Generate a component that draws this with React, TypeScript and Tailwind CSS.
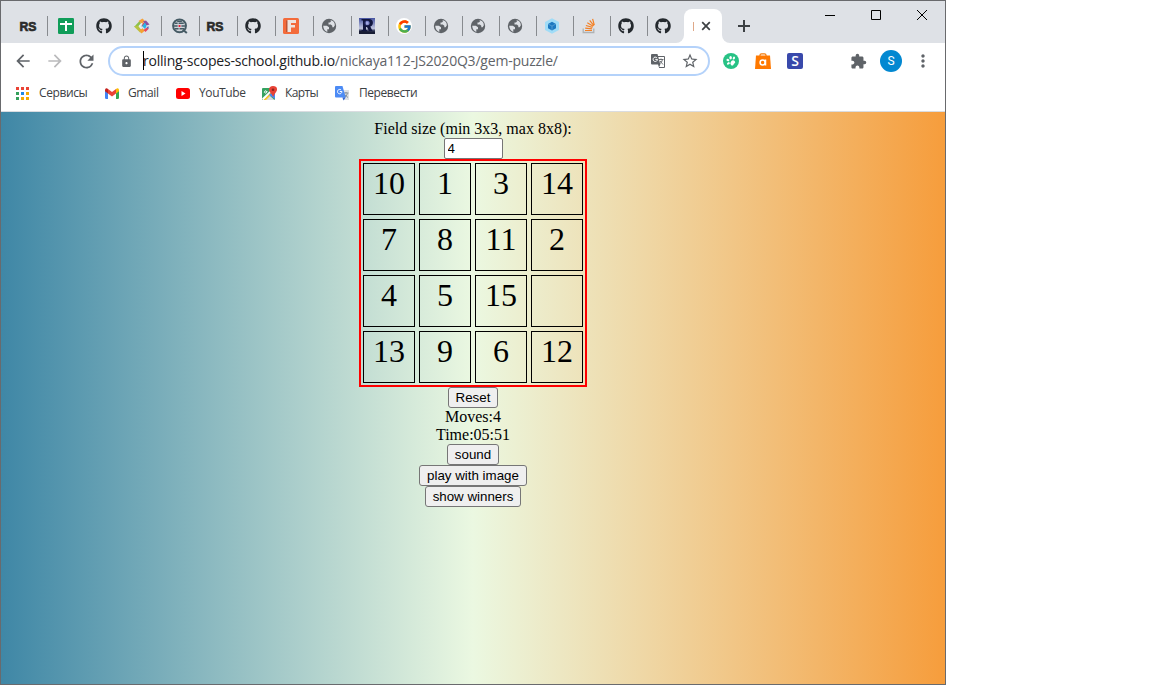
import type { ReactNode } from "react";
import { FaGithub } from "react-icons/fa";
import { FcGoogle } from "react-icons/fc";
import {
  MdArrowBack,
  MdArrowForward,
  MdExtension,
  MdLock,
  MdMoreVert,
  MdRefresh,
  MdStarBorder,
} from "react-icons/md";

function RsIcon() {
  return (
    <svg width="16" height="16" viewBox="0 0 16 16" className="overflow-visible">
      <text x="-0.5" y="14" fontFamily="Liberation Sans" fontWeight="bold" fontSize="15" textLength="17" lengthAdjust="spacingAndGlyphs" transform="translate(0 1.4) scale(1 .84)" fill="#2b2b2b" stroke="#2b2b2b" strokeWidth=".8">RS</text>
    </svg>
  );
}

function SheetIcon() {
  return (
    <svg width="16" height="16" viewBox="0 0 16 16">
      <rect width="16" height="16" rx="1.3" fill="#109d59" />
      <path d="M2 5h12v2H9v6H7V7H2zM7 3h2v3H7z" fill="#fff" />
    </svg>
  );
}

function CodeArrowsIcon() {
  return (
    <svg width="16" height="16" viewBox="0 0 16 16">
      <path d="M6 2.500L7 5.500 4.500 8.500 0 9z" fill="#8cc04b" />
      <path d="M0 8.500l4 -1 3 4-.5 3.500z" fill="#b5c441" />
      <path d="M4.500 3L8.500 0.500 11 3 8 5.500z" fill="#f6a13a" />
      <path d="M9 3.500l3-1 3.500 4-3 1z" fill="#8c4fa0" />
      <path d="M7.500 7.500L11 4.500l1.500 3.500-1.500 3z" fill="#25b3e8" />
      <path d="M5 12l3-2 3 2.500L7.500 15.500z" fill="#f4a233" />
      <path d="M9 5l1.800-.7-3.300 5z" fill="#e33a38" />
      <path d="M9.500 12l3-2.200 2.500.7-3.500 3.500z" fill="#e9485c" />
      <path d="M12.500 9l2.500-.5-1 2.500z" fill="#506ac0" />
      <path d="M7.200 5L4.500 8l2.700 3.200 1-1L6.600 8l1.600-2z" fill="#e9edf1" />
    </svg>
  );
}

function SearchGridIcon() {
  return (
    <svg width="17" height="16" viewBox="0 0 17 16" fill="none" stroke="#455a64">
      <circle cx="8" cy="7.8" r="6.900" strokeWidth="2" fill="#cfd5da" />
      <path d="M3 5h3m1 0h5.500M2 8h4m4 0h4M3 11h4m1 0h5M5.500 3h5" strokeWidth="1.600" />
      <path d="M11.500 12l4.300 3.500" strokeWidth="2.200" />
      <path d="M7 7h2v2H7z" fill="#f0102c" stroke="none" />
    </svg>
  );
}

function FIcon() {
  return (
    <svg width="16" height="16" viewBox="0 0 16 16">
      <rect width="16" height="16" rx="1.5" fill="#f36b3b" />
      <path d="M5 13.5V3h8" fill="none" stroke="#bd5434" strokeWidth="2" transform="translate(-1 .5)" />
      <path d="M4.500 2H13v3H8v2h4v2.500H8V14H4.500z" fill="#eee5df" />
    </svg>
  );
}

function RIcon() {
  return (
    <svg width="16" height="16" viewBox="0 0 16 16">
      <defs>
        <linearGradient id="night" x1="0" y1="0" x2="0" y2="1">
          <stop offset="0" stopColor="#4653a0" />
          <stop offset=".65" stopColor="#c0c5df" />
          <stop offset=".8" stopColor="#303653" />
          <stop offset="1" stopColor="#10142a" />
        </linearGradient>
        <radialGradient id="moon">
          <stop stopColor="#c8ccff" />
          <stop offset="1" stopColor="#3944af" stopOpacity="0" />
        </radialGradient>
      </defs>
      <rect width="16" height="16" fill="url(#night)" />
      <path fillRule="evenodd" d="M2.500 1H10c5 0 5 6.500 1.300 7.500l2.200 4.500H10L8 9H7v3h1v1.500H2.500V12H4V2.500H2.500zM7 3v4h2c2 0 2-4 0-4z" fill="#11163f" />
      <circle cx="8" cy="5" r="3.2" fill="url(#moon)" />
      <path d="M0 13l16 1v2H0z" fill="#181d34" />
    </svg>
  );
}

function WebpackIcon() {
  return (
    <svg width="16" height="16" viewBox="0 0 16 16">
      <path d="M8 .2l7 3.9v7.8l-7 3.9-7-3.9V4.100z" fill="#a0dcf7" />
      <path d="M8 3.700l4 2.200v4.300l-4 2.200-4-2.200V5.900z" fill="#1c78c0" />
      <path d="M4 5.900l4 2.200 4-2.200M8 8.100v4.300" stroke="#83bfe5" strokeWidth=".5" fill="none" />
    </svg>
  );
}

function StackIcon() {
  return (
    <svg width="16" height="16" viewBox="0 0 16 16" fill="none">
      <path d="M2.200 10.500v4h10.600v-4" stroke="#b0b2b3" strokeWidth="1.300" />
      <path d="M4 12.500h7M4.200 10.200l6.900.7M4.900 7.500l6.600 1.900M6.300 4.700l5.900 3.500M8.700 2.300l4.200 5.400M11.600.8l1.700 6.400" stroke="#f48024" strokeWidth="1.200" />
    </svg>
  );
}

function GoogleIcon() {
  return (
    <div className="flex size-4 shrink-0 items-center justify-center rounded-full bg-white">
      <FcGoogle size={15} />
    </div>
  );
}

function Globe() {
  return (
    <svg width="16" height="16" viewBox="0 0 16 16" className="shrink-0">
      <circle cx="8" cy="8" r="7.200" fill="#5f6368" />
      <path d="M2.200 7.800h3.600L8 9.200v2H6.300V14Q2.500 12.600 2.200 7.800zM9 2.300l1.200.8L9 4.600H7.500v2h2.300l1.500 1.200v1.400h1.300l1.200-1.700Q14 4 10.800 2.600z" fill="#dee1e6" />
    </svg>
  );
}

function Github() {
  return <FaGithub size={16} className="text-[#24292e]" />;
}

const wideTabs: ReactNode[] = [<SheetIcon />, <Github />, <CodeArrowsIcon />, <SearchGridIcon />];
const shiftedTabs: ReactNode[] = [<RsIcon />, <Github />, <FIcon />, <Globe />];
const narrowTabs: ReactNode[] = [<RIcon />, <GoogleIcon />, <Globe />, <Globe />, <Globe />, <WebpackIcon />, <StackIcon />, <Github />];

function Tab({ icon, className }: { icon: ReactNode; className: string }) {
  return (
    <div className={`flex h-5 shrink-0 items-center border-r border-[#888b8f] ${className}`}>
      <div className="flex h-4 w-4 items-center">{icon}</div>
    </div>
  );
}

function TabStrip() {
  return (
    <div className="flex h-[42px] bg-[#dee1e6]">
      <div className="flex h-5 mt-[15px] shrink-0">
        <Tab icon={<RsIcon />} className="w-[47px] pl-[19px]" />
        {wideTabs.map((icon, i) => <Tab key={i} icon={icon} className="w-[38px] pl-2.5" />)}
        {shiftedTabs.map((icon, i) => <Tab key={i} icon={icon} className="w-[38px] pl-[7px]" />)}
        {narrowTabs.map((icon, i) => <Tab key={i} icon={icon} className="w-[37px] pl-[7px]" />)}
        <div className="flex w-7 items-center pl-[7px]"><Github /></div>
      </div>
      <div className="flex shrink-0 items-end">
        <div className="h-2 w-2 bg-white">
          <div className="size-2 rounded-br-[8px] bg-[#dee1e6]" />
        </div>
        <div className="flex h-[34px] w-[38px] items-center rounded-t-[8px] bg-white pl-[9px]">
          <div className="h-[9px] w-px bg-[#dfa888]" />
          <svg width="10" height="10" viewBox="0 0 10 10" className="ml-[7px]">
            <path d="M1.200 1.200l7.600 7.600M8.800 1.200L1.200 8.800" stroke="#3c4043" strokeWidth="1.700" />
          </svg>
        </div>
        <div className="h-2 w-2 bg-white">
          <div className="size-2 rounded-bl-[8px] bg-[#dee1e6]" />
        </div>
      </div>
      <svg width="12" height="12" viewBox="0 0 12 12" className="mt-[19px] ml-2 shrink-0">
        <path d="M6 0v12M0 6h12" stroke="#3c4043" strokeWidth="2" />
      </svg>
      <svg width="104" height="12" viewBox="0 0 104 12" fill="none" stroke="#000" className="mt-2 ml-[74px] shrink-0">
        <path d="M1 6.500h10M47.500 1.500h9v9h-9z" />
        <path d="M93 1l10 10M103 1L93 11" />
      </svg>
    </div>
  );
}

function PageTranslateIcon() {
  return (
    <svg width="14" height="14" viewBox="0 0 14 14" className="ml-2 shrink-0">
      <path d="M6 2.500h7.500v11H8" fill="none" stroke="#5f6368" />
      <path d="M7.500 5.500h5M10 4.500v1M11.500 5.500Q11 8.500 8.500 10M9 7l3 3.500" fill="none" stroke="#5f6368" strokeWidth=".9" />
      <path d="M1 0h5.500L9.300 10.500H1Q0 10.500 0 9.500V1Q0 0 1 0zM7 10.500h2.300L8 13.500z" fill="#5f6368" />
      <path d="M4.300 5.400h2.200A2.200 2.200 0 1 1 5.800 3.700" fill="none" stroke="#fff" />
    </svg>
  );
}

function PawIcon() {
  return (
    <svg width="16" height="16" viewBox="0 0 16 16" className="ml-[13px] shrink-0">
      <circle cx="8" cy="8" r="8" fill="#27c285" />
      <g fill="#fff">
        <ellipse cx="7.600" cy="4.800" rx="1.300" ry="1.700" />
        <ellipse cx="10.900" cy="5.100" rx="1.100" ry="1.500" transform="rotate(25 10.900 5.100)" />
        <ellipse cx="4.900" cy="7.100" rx="1.500" ry="1.100" transform="rotate(25 4.900 7.100)" />
        <ellipse cx="5.400" cy="10.400" rx="1.500" ry="1.100" transform="rotate(-30 5.400 10.400)" />
        <path d="M8.200 8.200Q10 6.300 11.700 8q1.200 1.600-.3 2.400-.7.300-.9 1.300-1 1.600-2.500.3Q6.500 10.200 8.200 8.200z" />
      </g>
    </svg>
  );
}

function Toolbar() {
  return (
    <div className="flex h-9 items-center text-[#5f6368]">
      <MdArrowBack size={20} className="ml-3 shrink-0" />
      <MdArrowForward size={20} className="ml-3 shrink-0 text-[#bababc]" />
      <MdRefresh size={21} className="ml-[11px] shrink-0" />
      <div className="ml-[11px] flex h-[30px] w-[602px] shrink-0 items-center rounded-full border-2 border-[#b4d2fa] bg-white">
        <MdLock size={13} className="ml-2.5 shrink-0" />
        <div className="ml-2.5 h-[19px] w-px -translate-y-px bg-black" />
        <div className="-ml-px w-[500px] whitespace-nowrap text-sm leading-5 tracking-[-0.21px] font-['Open_Sans',sans-serif]">
          <span className="text-[#202124]">rolling-scopes-school.github.io</span>
          <span>/nickaya112-JS2020Q3/gem-puzzle/</span>
        </div>
        <PageTranslateIcon />
        <MdStarBorder size={18} className="ml-4 shrink-0" />
      </div>
      <PawIcon />
      <svg width="16" height="16" viewBox="0 0 16 16" className="ml-4 shrink-0">
        <path d="M5 3.500V2Q5 .8 6.500.8h3Q11 .8 11 2v1.500" fill="none" stroke="#f47b08" strokeWidth="1.200" />
        <path d="M1 2.500h14l1 13.500H0z" fill="#ff7900" />
        <circle cx="7.600" cy="9.500" r="2.500" fill="none" stroke="#fff" strokeWidth="1.500" />
        <path d="M10.500 6.500v6" stroke="#fff" strokeWidth="1.500" />
      </svg>
      <div className="ml-4 flex size-4 shrink-0 items-center justify-center rounded-[2px] bg-[#3949ab] font-['Open_Sans',sans-serif] text-sm font-semibold leading-4 text-white">S</div>
      <MdExtension size={17} className="ml-[47px] shrink-0" />
      <div className="ml-[13px] flex size-[22px] shrink-0 items-center justify-center rounded-full bg-[#0288d1] font-[Roboto,sans-serif] text-xs text-white">S</div>
      <MdMoreVert size={20} className="ml-[11px] shrink-0" />
    </div>
  );
}

const appColors = ["#ea4335", "#ea4335", "#ea4335", "#34a05b", "#1e88e5", "#f4a900", "#34a05b", "#f4a900", "#f4a900"];

function AppsIcon() {
  return (
    <svg width="13" height="13" viewBox="0 0 13 13">
      {appColors.map((color, i) => (
        <rect key={i} x={(i % 3) * 5} y={Math.floor(i / 3) * 5} width="3" height="3" fill={color} />
      ))}
    </svg>
  );
}

function GmailIcon() {
  return (
    <svg width="14" height="11" viewBox="0 0 14 11">
      <path d="M0 2v7.800Q0 11 1.200 11H3V4.500z" fill="#4285f4" />
      <path d="M11 4.500V11h1.800q1.200 0 1.200-1.200V2z" fill="#34a853" />
      <path d="M3 1v4.500l4 3 4-3V1L7 4z" fill="#ea4335" />
      <path d="M0 2Q0 0 1.800.2L3 1v4.500L0 3.300z" fill="#c5221f" />
      <path d="M14 2q0-2-1.800-1.800L11 1v4.500l3-2.200z" fill="#fbbc04" />
    </svg>
  );
}

function YouTubeIcon() {
  return (
    <svg width="14" height="11" viewBox="0 0 14 11">
      <rect width="14" height="11" rx="2.500" fill="#f00" />
      <path d="M5.500 3v5l4-2.500z" fill="#fff" />
    </svg>
  );
}

function MapsIcon() {
  return (
    <svg width="15" height="15" viewBox="0 0 15 15">
      <rect y="2" width="13" height="12" rx="1" fill="#35a260" />
      <path d="M0 12.500L10 3l1 1L2 14H1z" fill="#fff" />
      <path d="M2 14l5-5 5.500 5z" fill="#d9dce0" />
      <path d="M1.500 14L12 4v2L4 14z" fill="#fbc52c" />
      <path d="M7 9l6-5v9z" fill="#4a89f3" />
      <path d="M5.500 5.500H3.900v.8h.8a1.200 1.200 0 1 1-.3-1.200" fill="none" stroke="#fff" strokeWidth=".8" />
      <path d="M11 0c5 0 5 4.500 2 7.500L11 11C10.500 8 7 6 7 3.700Q7.200 0 11 0z" fill="#e84336" />
      <circle cx="11" cy="3.800" r="1.300" fill="#8b251f" />
    </svg>
  );
}

function TranslateIcon() {
  return (
    <svg width="15" height="15" viewBox="0 0 15 15">
      <path d="M5 4h9v10H8z" fill="#dfe1e4" />
      <path d="M8.500 7h5M11 6v1.200M12.500 7.500Q11.500 10.500 9 11.500M9.500 8.500l3.500 3" fill="none" stroke="#7c8790" strokeWidth=".9" />
      <path d="M1 0h6.500l3.200 11.500H1Q0 11.500 0 10.500V1Q0 0 1 0z" fill="#4c8bf5" />
      <path d="M7.500 11.500h3.200L8.500 14.500z" fill="#3267d6" />
      <path d="M4.800 5.500h2.100A2.200 2.200 0 1 1 6.100 3.900" fill="none" stroke="#fff" />
    </svg>
  );
}

function Bookmarks() {
  return (
    <div className="flex h-[33px] items-center border-b border-[#dadce0] pb-1 pl-[15px] font-['Open_Sans',sans-serif] text-xs text-[#3c4043]">
      <AppsIcon />
      <span className="ml-2.5 w-[66px] whitespace-nowrap tracking-[-0.4px]">Сервисы</span>
      <GmailIcon />
      <span className="ml-[9px] w-12 whitespace-nowrap tracking-[-0.4px]">Gmail</span>
      <YouTubeIcon />
      <span className="ml-[9px] w-[63px] whitespace-nowrap tracking-[-0.4px]">YouTube</span>
      <MapsIcon />
      <span className="ml-2 w-[50px] whitespace-nowrap tracking-[-0.6px]">Карты</span>
      <TranslateIcon />
      <span className="ml-[9px] whitespace-nowrap tracking-[-0.45px]">Перевести</span>
    </div>
  );
}

function GameButton({ label, className }: { label: string; className: string }) {
  return (
    <button className={`flex h-[21px] items-center justify-center whitespace-nowrap rounded-[3px] border border-[#767676] bg-[#efefef] font-['Liberation_Sans',sans-serif] text-[13.333px] leading-none ${className}`}>
      {label}
    </button>
  );
}

const tiles = ["10", "1", "3", "14", "7", "8", "11", "2", "4", "5", "15", "", "13", "9", "6", "12"];

function Game() {
  return (
    <main className="flex flex-1 flex-col items-center bg-[linear-gradient(to_right,#3f87a6,#ebf8e1,#f69d3c)] pt-2 font-['Liberation_Serif',serif] text-base leading-[18px] text-black">
      <label htmlFor="size">Field size (min 3x3, max 8x8):</label>
      <input
        id="size"
        defaultValue="4"
        className="h-[21px] w-[59px] rounded-[2px] border border-[#767676] bg-white px-[3px] font-['Liberation_Sans',sans-serif] text-[13.333px] leading-4"
      />
      <div className="grid grid-cols-4 gap-1 border-2 border-[#ff0000] p-0.5">
        {tiles.map((tile, i) => (
          <div key={i} className="h-[52px] w-[52px] border border-black text-center text-[32px] leading-[38px]">{tile}</div>
        ))}
      </div>
      <GameButton label="Reset" className="w-[50px]" />
      <div>Moves:4</div>
      <div>Time:05:51</div>
      <GameButton label="sound" className="w-[52px]" />
      <GameButton label="play with image" className="w-[108px]" />
      <GameButton label="show winners" className="w-24" />
    </main>
  );
}

export default function App() {
  return (
    <div className="h-[685px] w-full overflow-hidden bg-white">
      <div className="flex h-[685px] w-[946px] flex-col border border-[#696a6d] bg-white">
        <TabStrip />
        <Toolbar />
        <Bookmarks />
        <Game />
      </div>
    </div>
  );
}
